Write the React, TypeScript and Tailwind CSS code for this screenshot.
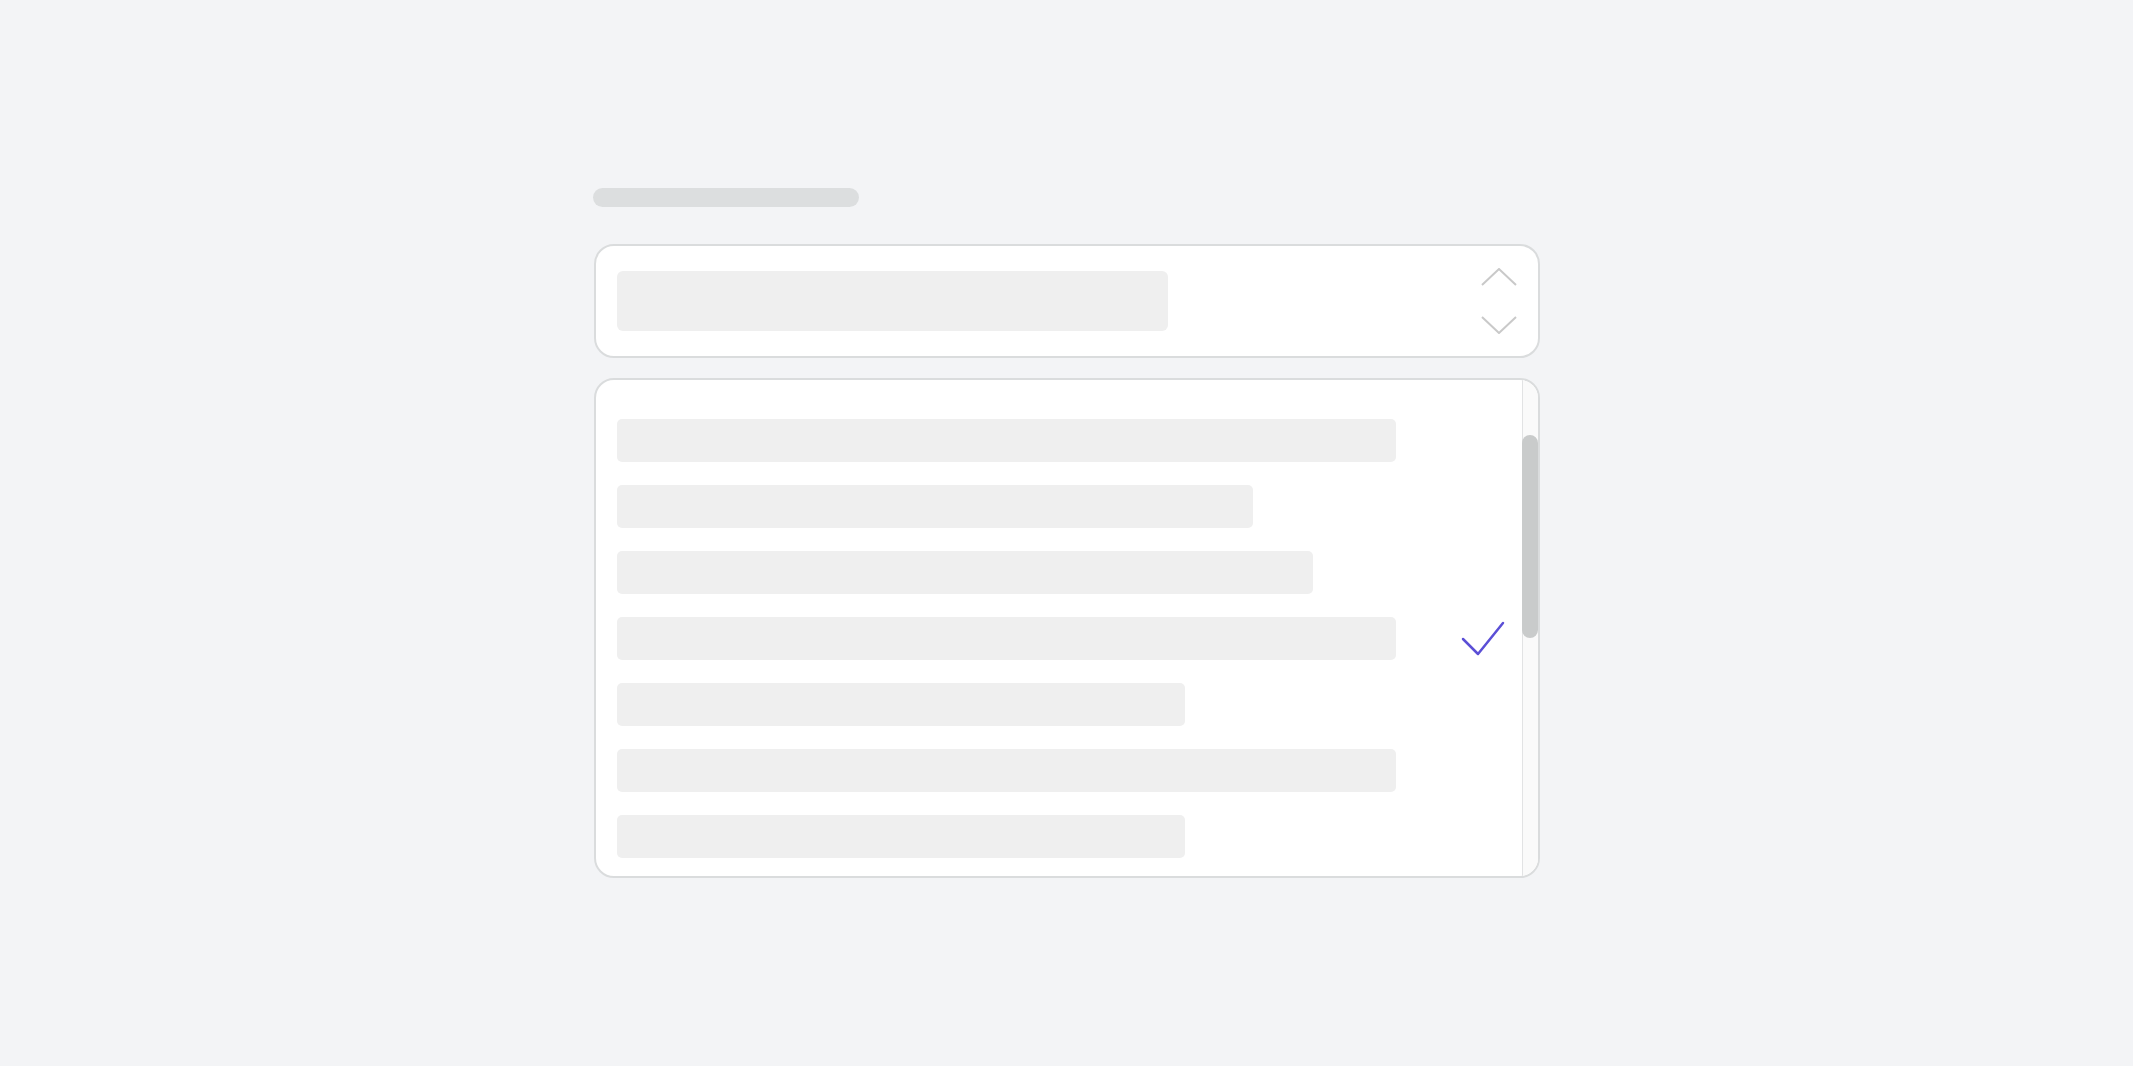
const rows = [
  { width: 779 },
  { width: 636 },
  { width: 696 },
  { width: 779, selected: true },
  { width: 568 },
  { width: 779 },
  { width: 568 },
]

const Chevrons = () => (
  <svg width="36" height="66" viewBox="0 0 36 66" fill="none" stroke="#c9c9c9" strokeWidth="2">
    <path d="M1 17 L18 1 L35 17" />
    <path d="M1 49 L18 65 L35 49" />
  </svg>
)

const Check = () => (
  <svg width="44" height="36" viewBox="0 0 44 36" fill="none" stroke="#5b4fd6" strokeWidth="2.5" strokeLinecap="round" strokeLinejoin="round">
    <path d="M2 18 L17 33 L42 2" />
  </svg>
)

const App = () => {
  return (
    <div className="min-h-screen w-full bg-[#f3f4f6] flex items-center justify-center">
      <div className="w-[946px] flex flex-col">
        {/* label skeleton */}
        <div className="h-[19px] w-[266px] rounded-full bg-[#dcdedf] -ml-px"></div>

        {/* select trigger */}
        <div className="mt-[37px] h-[114px] rounded-[20px] border-2 border-[#dadcdd] bg-white flex items-center pl-[21px] pr-[21px]">
          <div className="h-[60px] w-[551px] rounded-[6px] bg-[#efefef]"></div>
          <div className="ml-auto">
            <Chevrons />
          </div>
        </div>

        {/* options list */}
        <div className="mt-[20px] h-[500px] rounded-[20px] border-2 border-[#dadcdd] bg-white flex overflow-hidden">
          <div className="flex-1 flex flex-col gap-[23px] pt-[39px] pl-[21px] pr-[17px]">
            {rows.map((row, i) => (
              <div key={i} className="h-[43px] flex items-center">
                <div
                  className="h-full rounded-[5px] bg-[#efefef]"
                  style={{ width: row.width }}
                ></div>
                {row.selected && (
                  <div className="ml-auto">
                    <Check />
                  </div>
                )}
              </div>
            ))}
          </div>
          <div className="w-[16px] border-l border-[#e2e3e4] bg-[#fafafa] flex flex-col pt-[55px]">
            <div className="h-[203px] w-[16px] -ml-px rounded-full bg-[#c9cbcb]"></div>
          </div>
        </div>
      </div>
    </div>
  )
}

export default App
